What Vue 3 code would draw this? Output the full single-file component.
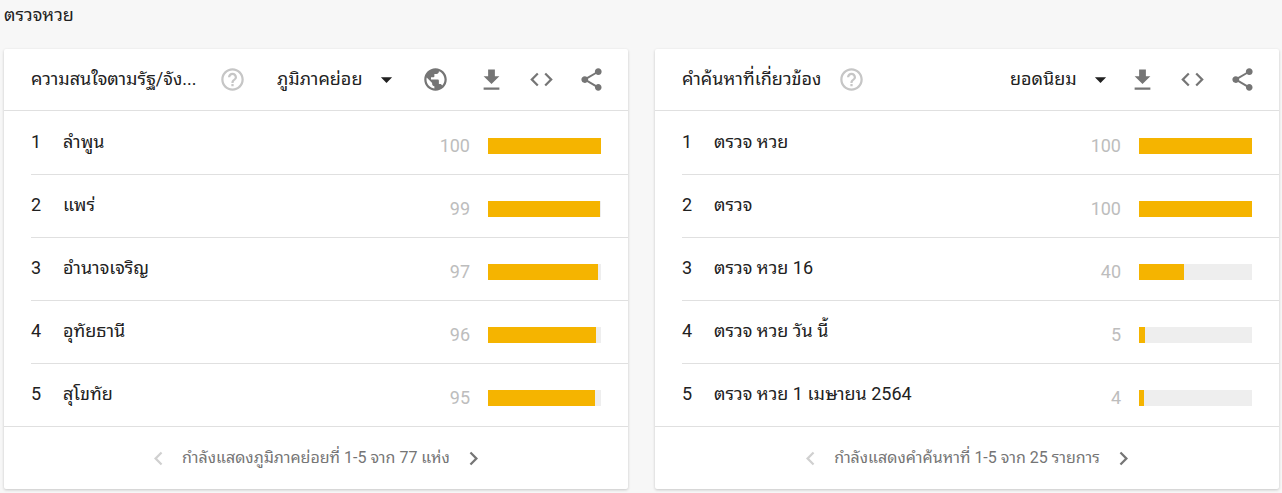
<script setup>
import { ref } from 'vue'

const paths = {
  globe:
    'M12 2C6.48 2 2 6.48 2 12s4.48 10 10 10 10-4.48 10-10S17.52 2 12 2zm-1 17.93c-3.95-.49-7-3.85-7-7.93 0-.62.08-1.21.21-1.79L9 15v1c0 1.1.9 2 2 2v1.93zm6.9-2.54c-.26-.81-1-1.39-1.9-1.39h-1v-3c0-.55-.45-1-1-1H8v-2h2c.55 0 1-.45 1-1V7h2c1.1 0 2-.9 2-2v-.41c2.93 1.19 5 4.06 5 7.41 0 2.08-.8 3.97-2.1 5.39z',
  download: 'M19 9h-4V3H9v6H5l7 7 7-7zM5 19v2h14v-2H5z',
  code: 'M9.4 16.6L4.8 12l4.6-4.6L8 6l-6 6 6 6 1.4-1.4zm5.2 0l4.6-4.6-4.6-4.6L16 6l6 6-6 6-1.4-1.4z',
  share:
    'M18 16.08c-.76 0-1.44.3-1.96.77L8.91 12.7c.05-.23.09-.46.09-.7s-.04-.47-.09-.7l7.05-4.11c.54.5 1.25.81 2.04.81 1.66 0 3-1.34 3-3s-1.34-3-3-3-3 1.34-3 3c0 .24.04.47.09.7L8.04 9.81C7.5 9.31 6.79 9 6 9c-1.66 0-3 1.34-3 3s1.34 3 3 3c.79 0 1.5-.31 2.04-.81l7.12 4.16c-.05.21-.08.43-.08.65 0 1.61 1.31 2.92 2.92 2.92s2.92-1.31 2.92-2.92-1.31-2.92-2.92-2.92z',
  help: 'M11 18h2v-2h-2v2zm1-16C6.48 2 2 6.48 2 12s4.48 10 10 10 10-4.48 10-10S17.52 2 12 2zm0 18c-4.41 0-8-3.59-8-8s3.59-8 8-8 8 3.59 8 8-3.59 8-8 8zm0-14c-2.21 0-4 1.79-4 4h2c0-1.1.9-2 2-2s2 .9 2 2c0 2-3 1.75-3 5h2c0-2.25 3-2.5 3-5 0-2.21-1.79-4-4-4z',
  caret: 'M7 10l5 5 5-5z',
  prev: 'M15.41 7.41L14 6l-6 6 6 6 1.41-1.41L10.83 12z',
  next: 'M10 6L8.59 7.41 13.17 12l-4.58 4.59L10 18l6-6z',
}

const cards = ref([
  {
    id: 'regions',
    title: 'ความสนใจตามรัฐ/จัง...',
    truncated: true,
    choice: 'ภูมิภาคย่อย',
    tools: ['globe', 'download', 'code', 'share'],
    rows: [
      ['ลำพูน', 100],
      ['แพร่', 99],
      ['อำนาจเจริญ', 97],
      ['อุทัยธานี', 96],
      ['สุโขทัย', 95],
    ],
    footer: 'กำลังแสดงภูมิภาคย่อยที่ 1-5 จาก 77 แห่ง',
  },
  {
    id: 'queries',
    title: 'คำค้นหาที่เกี่ยวข้อง',
    truncated: false,
    choice: 'ยอดนิยม',
    tools: ['download', 'code', 'share'],
    rows: [
      ['ตรวจ หวย', 100],
      ['ตรวจ', 100],
      ['ตรวจ หวย 16', 40],
      ['ตรวจ หวย วัน นี้', 5],
      ['ตรวจ หวย 1 เมษายน 2564', 4],
    ],
    footer: 'กำลังแสดงคำค้นหาที่ 1-5 จาก 25 รายการ',
  },
])
</script>

<template>
  <main class="page" lang="th">
    <h1 class="term">ตรวจหวย</h1>
    <div class="cards">
      <section v-for="card in cards" :key="card.id" class="card">
        <header class="head">
          <div class="heading" :class="{ grow: card.truncated }">
            <h2 class="title">{{ card.title }}</h2>
            <button class="help" type="button" aria-label="help">
              <svg class="icon" viewBox="0 0 24 24"><path :d="paths.help" /></svg>
            </button>
          </div>
          <div class="picker">
            <select class="select" :aria-label="card.title">
              <option>{{ card.choice }}</option>
            </select>
            <svg class="icon caret" viewBox="0 0 24 24"><path :d="paths.caret" /></svg>
          </div>
          <button
            v-for="tool in card.tools"
            :key="tool"
            class="tool"
            :class="{ spaced: tool === 'globe' }"
            type="button"
            :aria-label="tool"
          >
            <svg class="icon" viewBox="0 0 24 24"><path :d="paths[tool]" /></svg>
          </button>
        </header>
        <ol class="rows">
          <li v-for="([name, value], i) in card.rows" :key="name" class="row">
            <span class="rank">{{ i + 1 }}</span>
            <span class="name">{{ name }}</span>
            <span class="score">
              <span class="value">{{ value }}</span>
              <span class="track"><span class="fill" :style="{ width: value + '%' }"></span></span>
            </span>
          </li>
        </ol>
        <footer class="foot">
          <button class="step" type="button" aria-label="previous" disabled>
            <svg class="icon" viewBox="0 0 24 24"><path :d="paths.prev" /></svg>
          </button>
          <span>{{ card.footer }}</span>
          <button class="step" type="button" aria-label="next">
            <svg class="icon" viewBox="0 0 24 24"><path :d="paths.next" /></svg>
          </button>
        </footer>
      </section>
    </div>
  </main>
</template>

<style>
body {
  background: #f7f7f7;
}
</style>

<style scoped>
.page {
  padding: 4px 3px 4px 4px;
  color: #212121;
  font-family: Roboto, "Noto Sans Thai Looped", "Noto Looped Thai", Loma, Waree, "Noto Sans Thai", "Noto Sans", sans-serif;
  font-size: 18px;
  line-height: 24px;
}
.term,
.title {
  margin: 0;
  font-size: 18px;
  font-weight: 400;
  white-space: nowrap;
}
.term {
  line-height: 21px;
}
.cards {
  display: grid;
  grid-template-columns: 1fr 1fr;
  gap: 27px;
  margin-top: 24px;
}
.card {
  min-width: 0;
  background: #fff;
  border-radius: 2px;
  box-shadow: 0 1px 3px rgba(0, 0, 0, 0.2);
}
.head {
  display: flex;
  align-items: center;
  height: 60px;
  padding: 0 12px 1px 27px;
  border-bottom: 1px solid #e0e0e0;
}
.heading {
  display: flex;
  align-items: center;
  justify-content: space-between;
  gap: 17px;
  margin-right: 31px;
}
.heading.grow {
  flex: 1;
}
button {
  display: flex;
  align-items: center;
  justify-content: center;
  padding: 0;
  border: 0;
  background: none;
  color: #757575;
}
.icon {
  display: block;
  width: 27px;
  height: 27px;
  fill: currentColor;
}
.help {
  color: #c6c6c6;
}
.picker {
  display: grid;
  align-items: center;
  margin-left: auto;
  margin-right: 3px;
}
.select {
  grid-area: 1 / 1;
  appearance: none;
  margin: 0;
  padding: 0 37px 0 0;
  border: 0;
  background: none;
  color: inherit;
  font: inherit;
}
.caret {
  grid-area: 1 / 1;
  justify-self: end;
  pointer-events: none;
}
.tool {
  flex: none;
  width: 50px;
  height: 50px;
}
.spaced {
  margin: 0 6px 0 7px;
}
.rows {
  margin: 0;
  padding: 1px 0 0 27px;
  list-style: none;
}
.row {
  display: flex;
  align-items: center;
  height: 60px;
  padding: 0 27px 2px 0;
}
.row:not(:last-child) {
  border-bottom: 1px solid #e0e0e0;
}
.rank {
  width: 32px;
}
.name {
  flex: 1;
}
.score {
  display: flex;
  align-items: center;
  gap: 18px;
  padding-top: 8px;
  color: #bdbdbd;
}
.track {
  width: 113px;
  height: 16px;
  background: #eee;
}
.fill {
  display: block;
  height: 100%;
  background: #f5b400;
}
.foot {
  display: flex;
  align-items: center;
  justify-content: center;
  gap: 10px;
  height: 62px;
  border-top: 1px solid #e0e0e0;
  color: #757575;
  font-size: 16px;
}
.step:disabled {
  color: #d0d0d0;
}
</style>
